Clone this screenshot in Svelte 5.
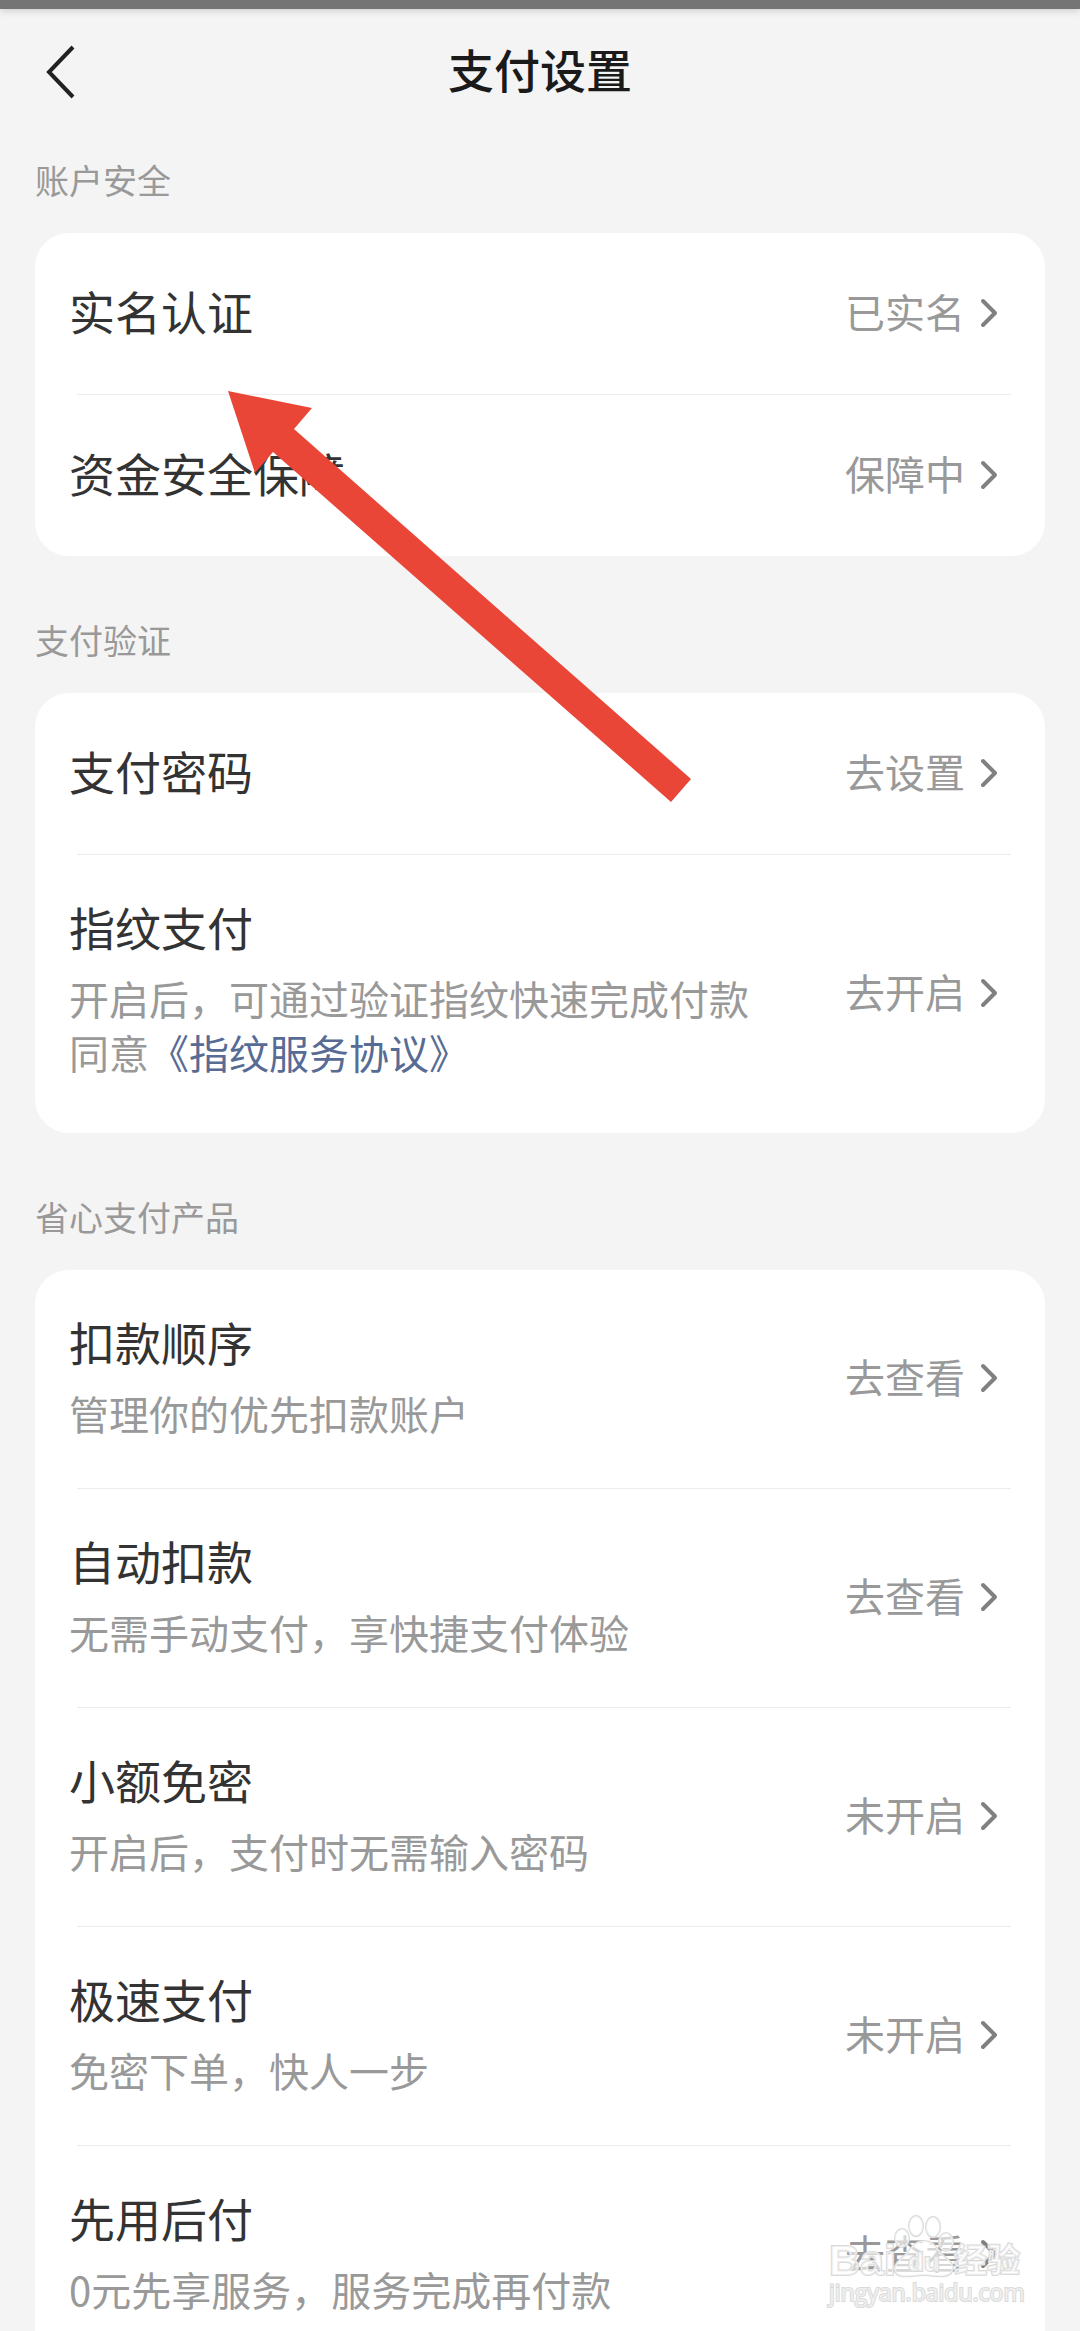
<script>
  const groups = [
    {
      title: '账户安全',
      items: [
        { id: 'realname', name: '实名认证', status: '已实名' },
        { id: 'guarantee', name: '资金安全保障', status: '保障中' },
      ],
    },
    {
      title: '支付验证',
      items: [
        { id: 'password', name: '支付密码', status: '去设置' },
        {
          id: 'fingerprint',
          name: '指纹支付',
          desc: '开启后，可通过验证指纹快速完成付款',
          agreement: '《指纹服务协议》',
          status: '去开启',
        },
      ],
    },
    {
      title: '省心支付产品',
      items: [
        { id: 'order', name: '扣款顺序', desc: '管理你的优先扣款账户', status: '去查看' },
        { id: 'auto', name: '自动扣款', desc: '无需手动支付，享快捷支付体验', status: '去查看' },
        { id: 'small', name: '小额免密', desc: '开启后，支付时无需输入密码', status: '未开启' },
        { id: 'fast', name: '极速支付', desc: '免密下单，快人一步', status: '未开启' },
        { id: 'later', name: '先用后付', desc: '0元先享服务，服务完成再付款', status: '去查看' },
      ],
    },
  ];
</script>

<div class="page">
  <div class="status-bar"></div>

  <header>
    <button class="back" aria-label="返回">
      <svg width="32" height="56" viewBox="0 0 32 56" aria-hidden="true">
        <path d="M30 4 L6 29 L30 54" fill="none" stroke="#222" stroke-width="4" />
      </svg>
    </button>
    <h1>支付设置</h1>
  </header>

  <main>
    {#each groups as group}
      <section>
        <h2>{group.title}</h2>
        <div class="card">
          {#each group.items as item}
            <div class="row">
              <div class="info">
                <h3 id={item.id}>{item.name}</h3>
                {#if item.desc}
                  <p>{item.desc}</p>
                {/if}
                {#if item.agreement}
                  <p class="agree">同意<a href="#agreement">{item.agreement}</a></p>
                {/if}
              </div>
              <button class="status" aria-describedby={item.id}>
                <span>{item.status}</span>
                <svg width="20" height="32" viewBox="0 0 20 32" aria-hidden="true">
                  <path
                    d="M4 3 L16 15 L4 27"
                    fill="none"
                    stroke="#808080"
                    stroke-width="4"
                    stroke-linecap="round"
                    stroke-linejoin="round"
                  />
                </svg>
              </button>
            </div>
          {/each}
        </div>
      </section>
    {/each}
  </main>

  <!-- pointer to the first row -->
  <svg class="arrow" width="464" height="412" viewBox="0 0 464 412" aria-hidden="true">
    <path d="M0 0 L84 17 L66 38 L463 388 L443 411 L45 61 L27 82 Z" fill="#ea4638" />
  </svg>

  <svg class="watermark" width="200" height="100" viewBox="0 0 200 100" role="img" aria-label="Baidu 经验">
    <g class="ink">
      <text class="brand" x="3" y="65">Bai</text>
      <path
        d="M98 31 C86 31 85 41 77 47 C69 53 67 58 70 63 C75 69 88 65 98 65 C108 65 119 69 125 63 C129 58 127 53 119 47 C111 41 110 31 98 31 Z"
      />
      <ellipse cx="76" cy="28" rx="7" ry="9" />
      <ellipse cx="90" cy="16" rx="7" ry="10" />
      <ellipse cx="107" cy="17" rx="7" ry="10" />
      <ellipse cx="120" cy="32" rx="7" ry="9" />
      <text class="du" x="82" y="61">du</text>
      <text class="jingyan" x="128" y="62">经验</text>
      <text class="url" x="3" y="91">jingyan.baidu.com</text>
    </g>
  </svg>
</div>

<style>
  :global(html) {
    scrollbar-width: none;
  }

  :global(body) {
    background: #f4f4f4;
  }

  .page {
    position: relative;
    font-family: 'Noto Sans CJK SC', sans-serif;
    color: #333;
  }

  .status-bar {
    height: 9px;
    background: #757575;
    box-shadow: 0 1px 8px rgba(0, 0, 0, 0.2);
  }

  header {
    display: grid;
    grid-template-columns: 1fr auto 1fr;
    align-items: center;
    height: 124px;
    padding: 0 43px;
  }

  button {
    padding: 0;
    border: 0;
    background: none;
    font-family: inherit;
    cursor: pointer;
  }

  .back {
    display: flex;
    justify-self: start;
  }

  h1,
  h2,
  h3,
  p {
    margin: 0;
  }

  h1 {
    padding-bottom: 6px;
    font-size: 46px;
    font-weight: 500;
    line-height: 66px;
    color: #1a1a1a;
  }

  main {
    padding: 0 35px;
  }

  section {
    padding-top: 60px;
  }

  section:first-child {
    padding-top: 23px;
  }

  h2 {
    margin-bottom: 29px;
    font-size: 34px;
    font-weight: 400;
    line-height: 48px;
    color: #999;
  }

  .card {
    border-radius: 34px;
    background: #fff;
  }

  .row {
    position: relative;
    display: flex;
    align-items: center;
    justify-content: space-between;
    min-height: 161px;
    padding: 0 46px 0 34px;
  }

  .row + .row {
    margin-top: 1px;
  }

  .row + .row::before {
    content: '';
    position: absolute;
    top: -1px;
    left: 42px;
    right: 34px;
    height: 1px;
    background: #ececec;
  }

  .info {
    padding-bottom: 8px;
  }

  .info:has(p) {
    padding: 38px 0 48px;
  }

  h3 {
    font-size: 46px;
    font-weight: 400;
    line-height: 66px;
  }

  p {
    font-size: 40px;
    line-height: 54px;
    color: #999;
  }

  h3 + p {
    margin-top: 12px;
  }

  .agree {
    margin-bottom: 6px;
  }

  a {
    color: #576b95;
    text-decoration: none;
  }

  .status {
    display: flex;
    align-items: center;
    gap: 14px;
    font-size: 40px;
    line-height: 54px;
    color: #999;
    white-space: nowrap;
  }

  .status span {
    padding-bottom: 6px;
  }

  .arrow {
    position: absolute;
    top: 391px;
    left: 228px;
    pointer-events: none;
  }

  .watermark {
    position: absolute;
    top: 2210px;
    right: 54px;
    pointer-events: none;
  }

  .ink {
    fill: #fff;
    fill-opacity: 0.6;
    stroke: #dadada;
    stroke-width: 2;
    paint-order: stroke;
    font-family: 'Liberation Sans', 'Noto Sans CJK SC', sans-serif;
  }

  .brand {
    font-size: 43px;
    font-weight: 700;
  }

  .du {
    font-size: 26px;
    font-weight: 700;
  }

  .jingyan {
    font-size: 33px;
    font-weight: 700;
  }

  .url {
    font-family: 'Open Sans', sans-serif;
    font-size: 23px;
  }
</style>
